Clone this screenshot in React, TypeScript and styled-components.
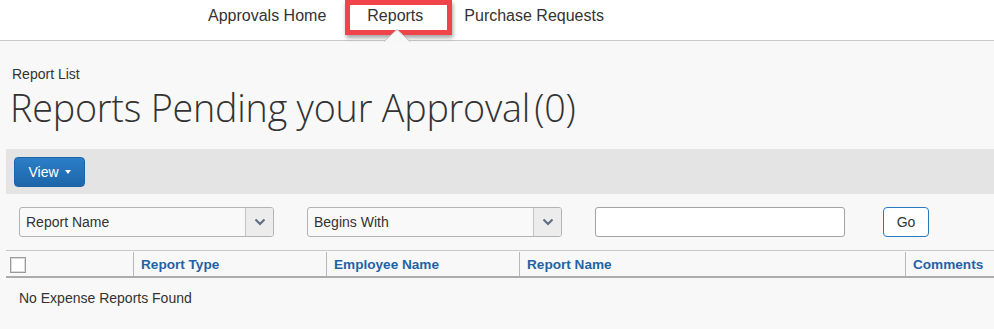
import React from "react";
import styled, { createGlobalStyle } from "styled-components";

const Global = createGlobalStyle`
  html, body { margin: 0; padding: 0; }
  body {
    background: #f8f8f8;
    font-family: "Liberation Sans", Arial, sans-serif;
    color: #333;
    width: 994px;
    height: 329px;
    overflow: hidden;
  }
`;

const TopNav = styled.nav`
  height: 41px;
  background: #fff;
  border-bottom: 1px solid #c9c9c9;
  display: flex;
  align-items: flex-start;
  gap: 41px;
  padding-left: 208px;
  box-sizing: border-box;
`;

const NavItem = styled.a<{ $active?: boolean }>`
  position: relative;
  font-size: 16px;
  line-height: 18px;
  padding-top: 7px;
  color: #333;
  text-decoration: none;
  cursor: pointer;
`;

const Highlight = styled.span`
  position: absolute;
  left: -22px;
  top: 0px;
  width: 107px;
  height: 35px;
  border: 5px solid #f1434a;
  box-sizing: border-box;
  box-shadow: 1px 3px 4px rgba(0, 0, 0, 0.35);
  pointer-events: none;
`;

const Notch = styled.svg`
  position: absolute;
  left: 17px;
  top: 28px;
`;

const Content = styled.main`
  padding: 0 0 0 6px;
`;

const TitleBlock = styled.header`
  padding: 25px 0 0 6px;
  height: 108px;
  box-sizing: border-box;
`;

const Crumb = styled.div`
  font-size: 14px;
  line-height: 16px;
  color: #333;
`;

const Title = styled.h1`
  margin: 2px 0 0 -2px;
  font-family: "Open Sans", sans-serif;
  font-weight: 300;
  font-size: 37.7px;
  line-height: 48px;
  color: #333;
  letter-spacing: -0.2px;
`;

const Count = styled.span`
  margin-left: 4px;
`;

const Toolbar = styled.div`
  height: 45px;
  background: #e3e4e3;
  padding: 8px;
  box-sizing: border-box;
  display: flex;
  align-items: flex-start;
`;

const ViewButton = styled.button`
  width: 71px;
  height: 30px;
  border: 1px solid #1e63a6;
  border-radius: 4px;
  background: linear-gradient(#2b7ec7, #1e66aa);
  color: #fff;
  font-family: "Liberation Sans", Arial, sans-serif;
  font-size: 14px;
  display: flex;
  align-items: center;
  justify-content: center;
  gap: 6px;
  padding: 0 0 1px 0;
`;

const Caret = styled.span`
  width: 0;
  height: 0;
  border-left: 3px solid transparent;
  border-right: 3px solid transparent;
  border-top: 4px solid #fff;
  margin-top: 1px;
`;

const FilterRow = styled.div`
  display: flex;
  align-items: flex-start;
  padding: 13px 0 0 13px;
  height: 56px;
  box-sizing: border-box;
`;

const SelectBox = styled.div<{ $gap: number }>`
  width: 255px;
  height: 30px;
  border: 1px solid #b3b3b3;
  border-radius: 3px;
  background: #f9f9f9;
  box-sizing: border-box;
  display: flex;
  margin-right: ${(p) => p.$gap}px;
  overflow: hidden;
`;

const SelectText = styled.div`
  flex: 1;
  font-size: 14px;
  line-height: 28px;
  padding-left: 6px;
  color: #333;
`;

const SelectArrow = styled.div`
  width: 27px;
  border-left: 1px solid #c4c4c4;
  background: #ececec;
  display: flex;
  align-items: center;
  justify-content: center;
`;

const TextInput = styled.div`
  width: 250px;
  height: 30px;
  border: 1px solid #a3a3a3;
  border-radius: 3px;
  background: #fff;
  box-sizing: border-box;
  margin-right: 38px;
`;

const GoButton = styled.button`
  width: 46px;
  height: 30px;
  border: 1px solid #2a78c2;
  border-radius: 4px;
  background: #fff;
  color: #333;
  font-family: "Liberation Sans", Arial, sans-serif;
  font-size: 14px;
  padding: 0;
`;

const Table = styled.div`
  border-top: 1px solid #c8c8c8;
`;

const HeadRow = styled.div`
  display: grid;
  grid-template-columns: 127px 193px 193px 386px 1fr;
  height: 27px;
  border-bottom: 2px solid #ababab;
  box-sizing: border-box;
  padding-top: 1px;
`;

const HeadCell = styled.div<{ $first?: boolean }>`
  border-left: ${(p) => (p.$first ? "none" : "1px solid #b8b8b8")};
  padding-left: ${(p) => (p.$first ? "4px" : "7px")};
  font-size: 13.6px;
  font-weight: bold;
  color: #1f63a5;
  display: flex;
  align-items: center;
  white-space: nowrap;
`;

const CheckBox = styled.span`
  width: 16px;
  height: 16px;
  border: 1px solid #9a9a9a;
  box-sizing: border-box;
  background: #fff;
  box-shadow: inset 0 0 0 1px #dcdcdc;
  display: block;
  margin-top: 1px;
`;

const EmptyRow = styled.div`
  font-size: 14px;
  padding: 12px 0 0 13px;
  color: #333;
`;

const columns = ["Report Type", "Employee Name", "Report Name", "Comments"];

const Chevron = () => (
  <svg width="12" height="8" viewBox="0 0 12 8">
    <path d="M1.5 1.5 L6 6 L10.5 1.5" fill="none" stroke="#5a6d80" strokeWidth="2" />
  </svg>
);

export default function App() {
  return (
    <>
      <Global />
      <TopNav>
        <NavItem>Approvals Home</NavItem>
        <NavItem $active>
          Reports
          <Highlight />
          <Notch width="26" height="14" viewBox="0 0 26 14">
            <path d="M0 13.5 L13 1.5 L26 13.5" fill="#f8f8f8" stroke="#bdbdbd" strokeWidth="1" />
          </Notch>
        </NavItem>
        <NavItem>Purchase Requests</NavItem>
      </TopNav>
      <Content>
        <TitleBlock>
          <Crumb>Report List</Crumb>
          <Title>
            Reports Pending your Approval<Count>(0)</Count>
          </Title>
        </TitleBlock>
        <Toolbar>
          <ViewButton>
            View <Caret />
          </ViewButton>
        </Toolbar>
        <FilterRow>
          <SelectBox $gap={33}>
            <SelectText>Report Name</SelectText>
            <SelectArrow>
              <Chevron />
            </SelectArrow>
          </SelectBox>
          <SelectBox $gap={33}>
            <SelectText>Begins With</SelectText>
            <SelectArrow>
              <Chevron />
            </SelectArrow>
          </SelectBox>
          <TextInput />
          <GoButton>Go</GoButton>
        </FilterRow>
        <Table>
          <HeadRow>
            <HeadCell $first>
              <CheckBox />
            </HeadCell>
            {columns.map((c) => (
              <HeadCell key={c}>{c}</HeadCell>
            ))}
          </HeadRow>
          <EmptyRow>No Expense Reports Found</EmptyRow>
        </Table>
      </Content>
    </>
  );
}
